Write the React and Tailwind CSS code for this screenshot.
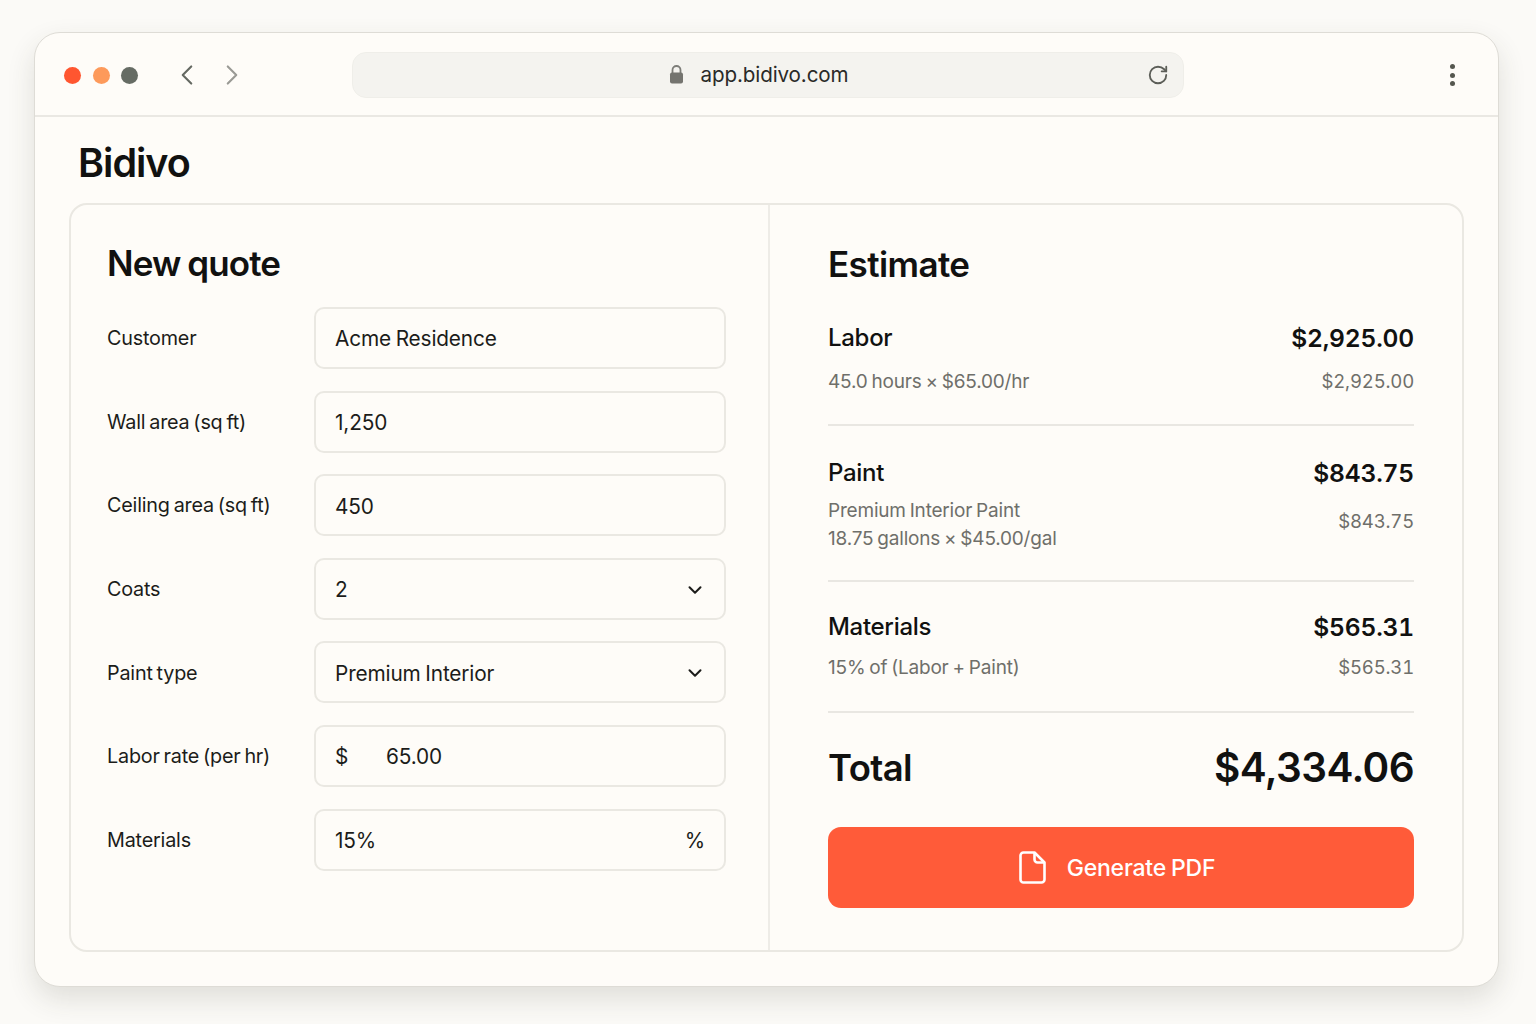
import React from "react";
import { ChevronLeft, ChevronRight, ChevronDown, RotateCw } from "lucide-react";

function Field({ label, children }) {
  return (
    <div className="flex items-center h-[62px]">
      <div className="w-[207px] pt-[2px] text-[19.8px] tracking-[-0.2px] [word-spacing:-1.5px] text-[#1c1c1a]">{label}</div>
      <div className="w-[412px] h-[62px] flex items-center justify-between px-[19px] pt-[2px] rounded-[10px] border-2 border-[#eae8e2] text-[20.8px] tracking-[-0.15px] [word-spacing:-1px] text-[#1c1c1a]">
        {children}
      </div>
    </div>
  );
}

function Line({ name, amount, children, sub, subClass, amountClass, className }) {
  return (
    <div className={className}>
      <div className="flex items-center justify-between h-[32px]">
        <span className="text-[24px] font-medium tracking-[-0.3px] text-[#111110]">{name}</span>
        <span className="text-[24.6px] font-semibold tracking-[-0.2px] tabular-nums text-[#111110]">{amount}</span>
      </div>
      <div className={"flex items-center justify-between text-[19px] text-[#6f6f6a] tracking-[-0.2px] [word-spacing:-1.2px] " + subClass}>
        <div>{children}</div>
        <div className={"tabular-nums text-[18.6px] " + amountClass}>{sub}</div>
      </div>
    </div>
  );
}

export default function App() {
  return (
    <div className="w-[1536px] h-[1024px] bg-[#fbfaf7] pt-[32px] pl-[34px] overflow-hidden font-['Inter',sans-serif]">
      <div className="w-[1465px] h-[955px] bg-[#fefcf8] rounded-[26px] border border-[#dedcd6] shadow-[0_12px_28px_rgba(60,55,45,0.14)] overflow-hidden flex flex-col">
        <div className="h-[84px] shrink-0 border-b-2 border-[#eae8e3] flex items-center pl-[29px] pr-[43px] pt-[2px]">
          <div className="flex items-center gap-[11.5px]">
            <span className="w-[17px] h-[17px] rounded-full bg-[#ff5630]" />
            <span className="w-[17px] h-[17px] rounded-full bg-[#fd9a5b]" />
            <span className="w-[17px] h-[17px] rounded-full bg-[#666c64]" />
          </div>
          <ChevronLeft className="ml-[32px] text-[#666a63]" size={34} strokeWidth={1.5} />
          <ChevronRight className="ml-[11px] text-[#9b9b96]" size={34} strokeWidth={1.5} />
          <div className="ml-[103px] w-[832px] h-[46px] rounded-[14px] bg-[#f4f3ef] border border-[#efeee9] flex items-center pr-[14px]">
            <div className="flex-1 flex items-center justify-center gap-[16px] pl-[18px]">
              <svg width="15" height="19" viewBox="0 0 15 19">
                <path d="M3.5 8V5a4 4 0 0 1 8 0v3" fill="none" stroke="#7d7d78" strokeWidth="1.8" />
                <rect x="1" y="7.5" width="13" height="11" rx="2" fill="#74746f" />
              </svg>
              <span className="text-[20.6px] tracking-[-0.1px] text-[#2a2a28]">app.bidivo.com</span>
            </div>
            <RotateCw className="text-[#5c5e58]" size={22} strokeWidth={2} />
          </div>
          <div className="ml-auto flex flex-col gap-[3.5px]">
            <span className="w-[5px] h-[5px] rounded-full bg-[#55574f]" />
            <span className="w-[5px] h-[5px] rounded-full bg-[#55574f]" />
            <span className="w-[5px] h-[5px] rounded-full bg-[#55574f]" />
          </div>
        </div>

        <div className="flex-1 px-[34px]">
          <h1 className="pl-[9px] pt-[8px] h-[86px] flex items-center text-[39.5px] font-semibold tracking-[-1px] text-[#111110]">Bidivo</h1>
          <div className="w-[1395px] h-[749px] rounded-[18px] border-2 border-[#eae8e2] flex">
            <div className="w-[699px] shrink-0 border-r-2 border-[#eeece7] pl-[36px] pt-[35px]">
              <h2 className="h-[46px] flex items-center text-[35px] font-semibold tracking-[-0.9px] [word-spacing:-1px] text-[#111110]">New quote</h2>
              <div className="mt-[21px] flex flex-col gap-[21.6px]">
                <Field label="Customer"><span>Acme Residence</span></Field>
                <Field label="Wall area (sq ft)"><span>1,250</span></Field>
                <Field label="Ceiling area (sq ft)"><span>450</span></Field>
                <Field label="Coats"><span>2</span><ChevronDown className="text-[#1c1c1a] mr-[-1px]" size={22} strokeWidth={2.2} /></Field>
                <Field label="Paint type"><span>Premium Interior</span><ChevronDown className="text-[#1c1c1a] mr-[-1px]" size={22} strokeWidth={2.2} /></Field>
                <Field label="Labor rate (per hr)"><span className="flex"><span className="w-[51px]">$</span><span>65.00</span></span></Field>
                <Field label="Materials"><span>15%</span><span>%</span></Field>
              </div>
            </div>
            <div className="w-[586px] ml-[58px] pt-[36px]">
              <h2 className="h-[46px] flex items-center text-[35px] font-semibold tracking-[-0.6px] text-[#111110]">Estimate</h2>
              <Line className="mt-[35px] pb-[27px] border-b-2 border-[#e9e7e2]" name="Labor" amount="$2,925.00" sub="$2,925.00" subClass="mt-[13px] h-[30px]">45.0 hours × $65.00/hr</Line>
              <Line className="pt-[31px] pb-[27px] border-b-2 border-[#e9e7e2]" name="Paint" amount="$843.75" sub="$843.75" subClass="mt-[8px]" amountClass="pb-[6px]">
                <div className="leading-[28px]">Premium Interior Paint</div>
                <div className="leading-[28px]">18.75 gallons × $45.00/gal</div>
              </Line>
              <Line className="pt-[29px] pb-[28px] border-b-2 border-[#e9e7e2]" name="Materials" amount="$565.31" sub="$565.31" subClass="mt-[10px] h-[30px]">15% of (Labor + Paint)</Line>
              <div className="mt-[28px] h-[54px] flex items-center justify-between">
                <span className="text-[36.5px] font-semibold tracking-[-0.6px] text-[#111110]">Total</span>
                <span className="text-[40.5px] font-semibold tracking-[-0.6px] text-[#111110]">$4,334.06</span>
              </div>
              <button className="mt-[32px] w-full h-[81px] rounded-[13px] bg-[#ff5b39] flex items-center justify-center gap-[21px] pr-[8px] text-white text-[23px] font-medium tracking-[-0.2px] [word-spacing:-1px]">
                <svg width="27" height="33" viewBox="0 0 27 33" fill="none" stroke="white" strokeWidth="2.6" strokeLinejoin="round">
                  <path d="M4.5 1.5h11l10 10v17a3 3 0 0 1-3 3h-18a3 3 0 0 1-3-3v-24a3 3 0 0 1 3-3z" />
                  <path d="M15.5 1.5v7a3 3 0 0 0 3 3h7" />
                </svg>
                <span className="pt-[2px]">Generate PDF</span>
              </button>
            </div>
          </div>
        </div>
      </div>
    </div>
  );
}
